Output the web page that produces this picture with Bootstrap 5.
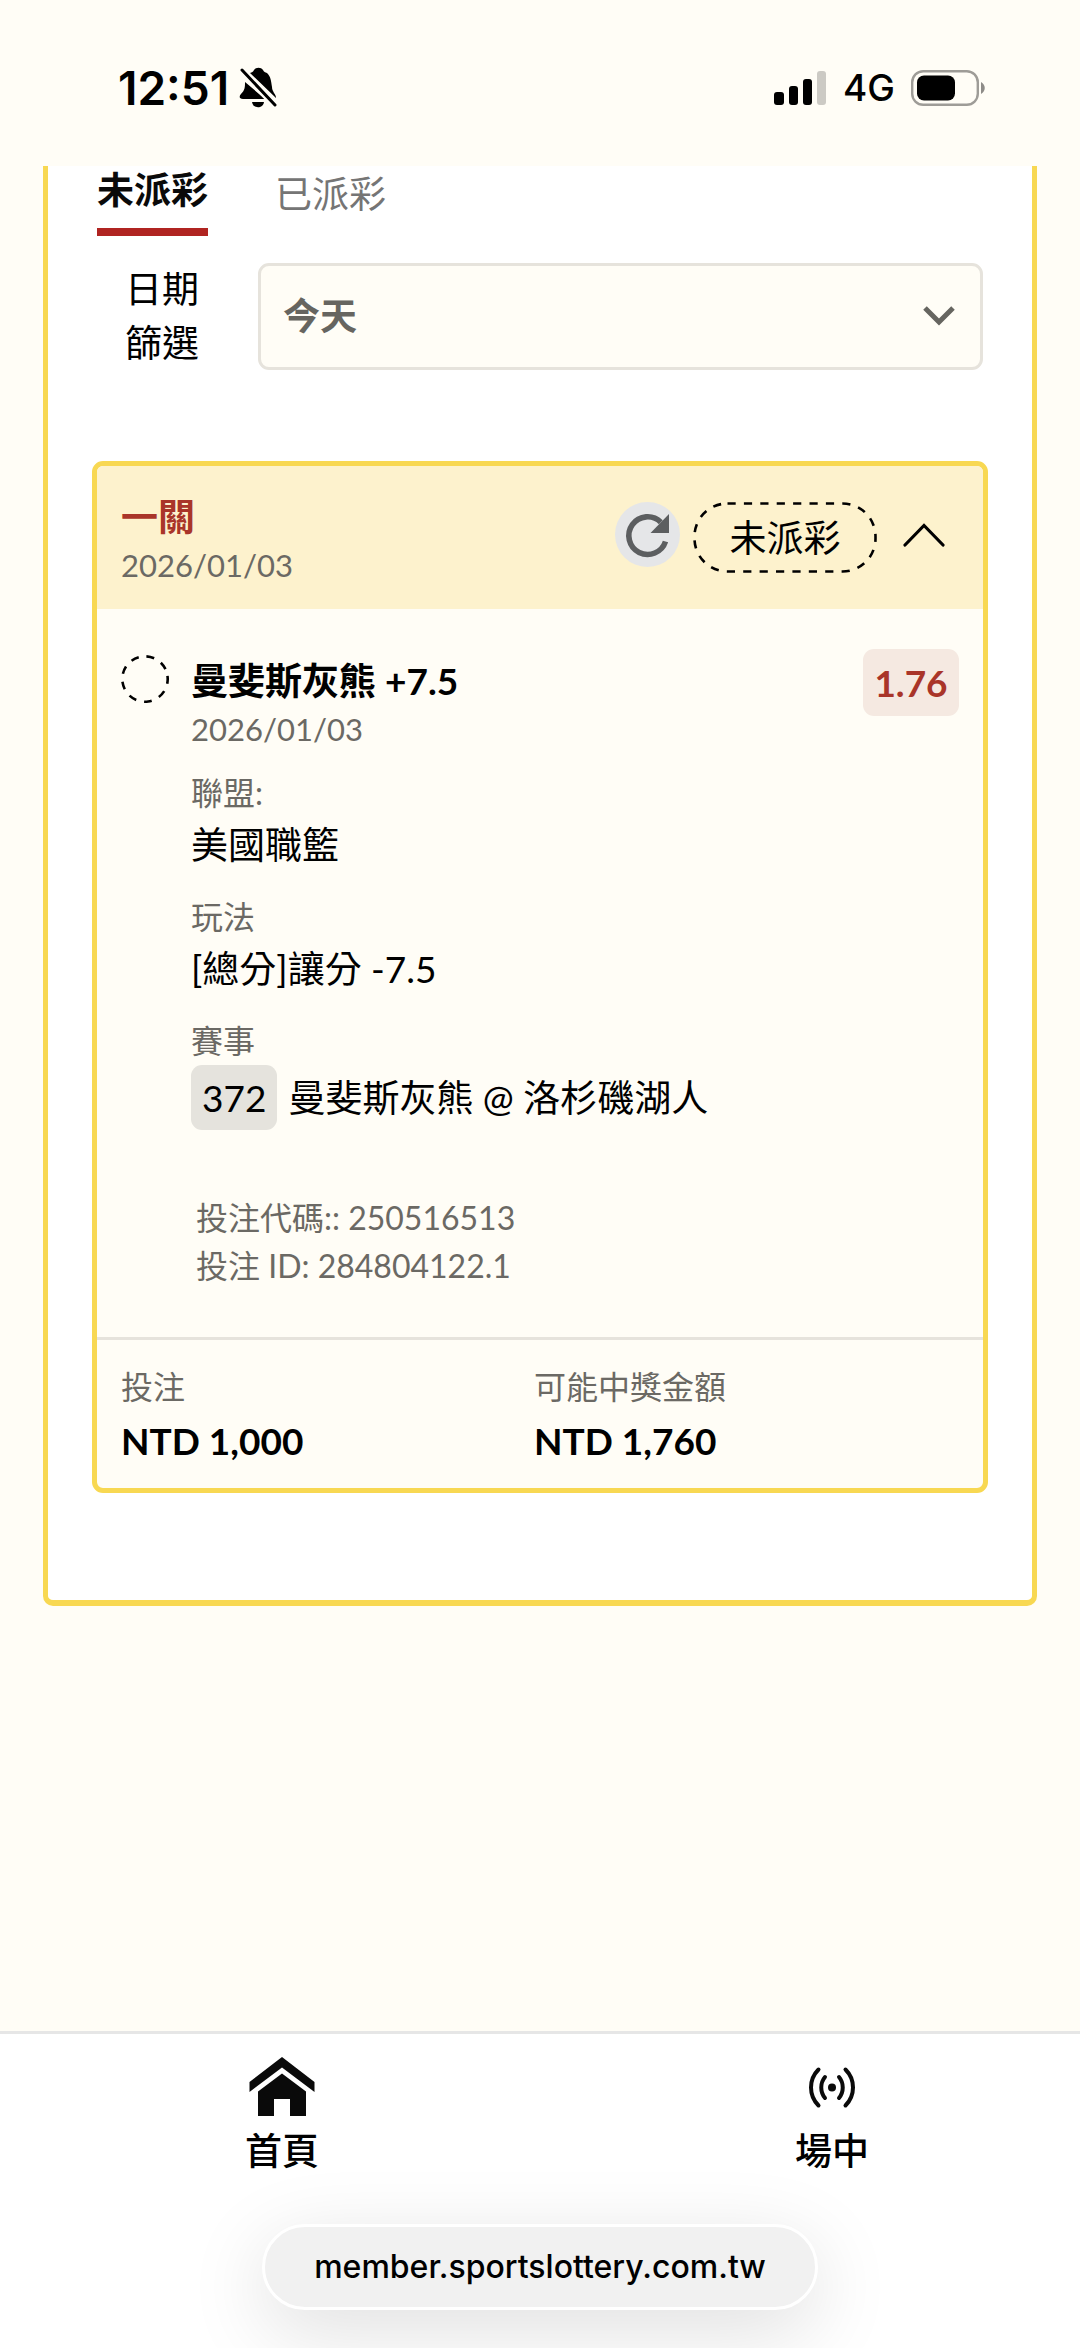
<!DOCTYPE html>
<html lang="zh-Hant">
<head>
<meta charset="utf-8">
<meta name="viewport" content="width=device-width, initial-scale=1">
<title>投注紀錄</title>
<link href="https://cdn.jsdelivr.net/npm/bootstrap@5.3.0/dist/css/bootstrap.min.css" rel="stylesheet">
<style>
:root { --cream:#fffdf6; --gold:#f8d852; --brick:#a93529; --muted:#6b6964; --line:#e6e3dc; }
body { background:var(--cream); color:#000; font-family:Lato,"Noto Sans CJK TC",sans-serif; font-size:37px; line-height:48px; }
svg { display:block; flex:none; }
.statusbar { height:166px; padding:0 94px 54px 118px; font-family:Inter,sans-serif; }
.clock { font-size:46px; font-weight:600; }
.clock-row { gap:10px; }
.network { font-weight:500; margin:0 16px; }
.panel { margin:0 43px; padding:0 44px 107px; background:#fff; border:solid var(--gold); border-width:0 5px 6px; border-radius:0 0 10px 10px; }
.bet-tabs { gap:67px; padding-left:5px; }
.bet-tabs .nav-link { padding:4px 0 0; color:#757575; line-height:48px; border:0; }
.bet-tabs .nav-link.active { padding:0 0 14px; color:#0a0a0a; font-weight:700; border-bottom:8px solid #b02421; }
.filter { padding:0 5px 0 32px; margin-top:26px; gap:58px; }
.filter label { flex:none; width:76px; line-height:54px; text-align:center; }
.filter .form-select { height:107px; padding:0 80px 0 22px; font-size:37px; line-height:48px; font-weight:700; color:#666560; background-color:var(--cream); border:3px solid var(--line); border-radius:11px;
  background-image:url("data:image/svg+xml,%3Csvg xmlns='http://www.w3.org/2000/svg' viewBox='0 0 32 20'%3E%3Cpath d='M2 2l14 14L30 2' fill='none' stroke='%23666560' stroke-width='5'/%3E%3C/svg%3E"); background-size:32px 20px; background-position:right 25px center; }
.ticket { margin-top:91px; background:var(--cream); border:5px solid var(--gold); border-radius:11px; overflow:hidden; color:#000; }
.ticket-head { height:143px; padding:0 38px 6px 24px; background:#fdf2cd; }
.ticket-name { padding-top:12px; }
.brick { color:var(--brick); font-weight:700; }
.sub, .day { font-size:32px; color:var(--muted); line-height:48px; }
.day { font-size:31px; }
.icon-btn { padding:0; border:0; background:none; line-height:0; }
.state { width:184px; height:71px; line-height:71px; margin:6px 26px 0 13px; text-align:center; }
.ticket-body { padding:40px 24px 47px 24px; }
.leg { gap:22px; }
.ring { margin-top:6px; }
.leg-title { margin-top:8px; font-weight:700; }
.fields { margin:16px 0 0; }
.fields dt { font-weight:400; }
.fields dd { margin:0 0 20px; line-height:56px; }
.fields .event { line-height:65px; gap:11px; margin-bottom:64px; }
.event-no { background:#e5e3dd; border-radius:11px; padding:0 11px; }
.codes { padding-left:5px; }
.odds { width:96px; height:67px; line-height:68px; background:#f5e9e1; border-radius:11px; text-align:center; }
.ticket-foot { border-top:3px solid var(--line); padding:23px 36px 17px 24px; }
.money { font-weight:700; line-height:60px; }
.bottombar { background:#fff; border-top:3px solid #e6e6e6; padding:13px 0 38px; overflow:hidden; }
.bottombar nav { padding:0 174px 0 208px; }
.bottombar .nav-item-link { width:148px; color:#000; text-decoration:none; font-weight:500; }
.address { width:556px; height:86px; margin-top:49px; line-height:80px; font-family:Inter,sans-serif; font-size:32px; font-weight:500; background:#f1f1f1; border:3px solid #fff; box-shadow:0 20px 80px rgba(0,0,0,.13); color:#000; padding:0; }
</style>
<script src="https://cdn.jsdelivr.net/npm/bootstrap@5.3.0/dist/js/bootstrap.bundle.min.js"></script>
</head>
<body class="d-flex flex-column min-vh-100">
<header class="statusbar d-flex align-items-end justify-content-between">
  <div class="clock-row d-flex align-items-center">
    <span class="clock">12:51</span>
    <svg width="38" height="42" viewBox="0 0 38 42"><path d="M11 6c2-1 3-1 4-3 2-3 7-3 9 0 1 2 2 2 4 3 4 4 4 8 5 14 0 5 4 7 4 11z"/><path d="M6 15l20 17H4c-4 0-4-3-2-5 4-4 4-7 4-12z"/><path d="M13 35h12c-1 7-11 7-12 0z"/><path d="M2 3l35 36" stroke="#fffdf6" stroke-width="7"/><path d="M3 3l33 35" stroke="#000" stroke-width="3" stroke-linecap="round"/></svg>
  </div>
  <div class="d-flex align-items-center">
    <svg width="53" height="36" viewBox="0 0 53 36"><rect y="22" width="10" height="13" rx="3"/><rect x="15" y="16" width="9" height="19" rx="3"/><rect x="29" y="9" width="9" height="26" rx="3"/><rect x="43" y="1" width="9" height="34" rx="3" fill="#cccac4"/></svg>
    <span class="network">4G</span>
    <svg width="75" height="36" viewBox="0 0 75 36"><rect x="1.2" y="1.2" width="65.6" height="33.6" rx="11" fill="none" stroke="#9e9c97" stroke-width="2.4"/><rect x="6" y="5.500" width="38" height="25" rx="7"/><path d="M70 12c5 3 5 9 0 12z" fill="#8e8c88"/></svg>
  </div>
</header>

<main class="panel">
  <ul class="nav bet-tabs">
    <li class="nav-item"><a class="nav-link active" href="#open" aria-current="page">未派彩</a></li>
    <li class="nav-item"><a class="nav-link" href="#settled">已派彩</a></li>
  </ul>
  <div class="filter d-flex align-items-center">
    <label for="date-filter">日期篩選</label>
    <select id="date-filter" class="form-select"><option selected>今天</option></select>
  </div>

  <article class="ticket card">
    <div class="ticket-head d-flex align-items-center">
      <div class="ticket-name me-auto">
        <div class="brick">一關</div>
        <div class="day">2026/01/03</div>
      </div>
      <button class="icon-btn" type="button" aria-label="重新整理"><svg width="65" height="65" viewBox="0 0 65 65"><circle cx="32.500" cy="32.500" r="32.500" fill="#e5e6e8"/><path d="M50.500 39.500A18.800 18.800 0 1 1 45.800 20.200" fill="none" stroke="#5c5e60" stroke-width="5.600"/><path d="M54 12v19H35.500z" fill="#5c5e60"/></svg></button>
      <div class="state position-relative">
        <svg class="position-absolute top-0 start-0" width="184" height="71" viewBox="0 0 184 71"><rect x="1.500" y="1.500" width="181" height="68" rx="33" fill="none" stroke="#000" stroke-width="2.600" stroke-dasharray="8.200 8.200"/></svg>
        未派彩
      </div>
      <button class="icon-btn" type="button" aria-label="收合"><svg width="42" height="24" viewBox="0 0 42 24"><path d="M2 22L21 2.500 40 22" fill="none" stroke="#000" stroke-width="3.200" stroke-linecap="round"/></svg></button>
    </div>

    <div class="ticket-body">
      <div class="leg d-flex align-items-start">
        <svg class="ring" width="48" height="48" viewBox="0 0 48 48"><circle cx="24" cy="24" r="22.700" fill="none" stroke="#000" stroke-width="2.600" stroke-dasharray="7.900 7.950" transform="rotate(-8 24 24)"/></svg>
        <div class="flex-grow-1">
          <div class="leg-title">曼斐斯灰熊 +7.5</div>
          <div class="day">2026/01/03</div>
          <dl class="fields">
            <dt class="sub">聯盟:</dt>
            <dd>美國職籃</dd>
            <dt class="sub">玩法</dt>
            <dd>[總分]讓分 -7.5</dd>
            <dt class="sub">賽事</dt>
            <dd class="event d-flex"><span class="event-no">372</span><span>曼斐斯灰熊 @ 洛杉磯湖人</span></dd>
          </dl>
          <div class="codes sub">
            <div>投注代碼:: 250516513</div>
            <div>投注 ID: 284804122.1</div>
          </div>
        </div>
        <div class="odds brick">1.76</div>
      </div>
    </div>

    <div class="ticket-foot">
      <div class="row g-0">
        <div class="col-6"><div class="sub">投注</div><div class="money">NTD 1,000</div></div>
        <div class="col-6"><div class="sub">可能中獎金額</div><div class="money">NTD 1,760</div></div>
      </div>
    </div>
  </article>
</main>

<footer class="bottombar mt-auto">
  <nav class="d-flex justify-content-between">
    <a class="nav-item-link d-flex flex-column align-items-center" href="#home">
      <svg width="66" height="80" viewBox="0 0 66 80"><path d="M33 10l32.500 25v10L33 20.500.5 45V35z" fill="#0a0a0a"/><path d="M33 26.500l24 18V69H41V52H25v17H9V44.500z" fill="#0a0a0a"/></svg>
      <span>首頁</span>
    </a>
    <a class="nav-item-link d-flex flex-column align-items-center" href="#live">
      <svg width="50" height="80" viewBox="0 0 50 80" fill="none" stroke="#0a0a0a" stroke-width="4" stroke-linecap="round"><circle cx="25" cy="40.500" r="4" fill="#0a0a0a" stroke="none"/><path d="M18 30c-5 6-5 15 0 21M32 30c5 6 5 15 0 21M11.500 22.500c-10 10-10 26 0 36M38.500 22.500c10 10 10 26 0 36"/></svg>
      <span>場中</span>
    </a>
  </nav>
  <div class="d-flex justify-content-center">
    <button type="button" class="address rounded-pill flex-shrink-0">member.sportslottery.com.tw</button>
  </div>
</footer>
</body>
</html>
